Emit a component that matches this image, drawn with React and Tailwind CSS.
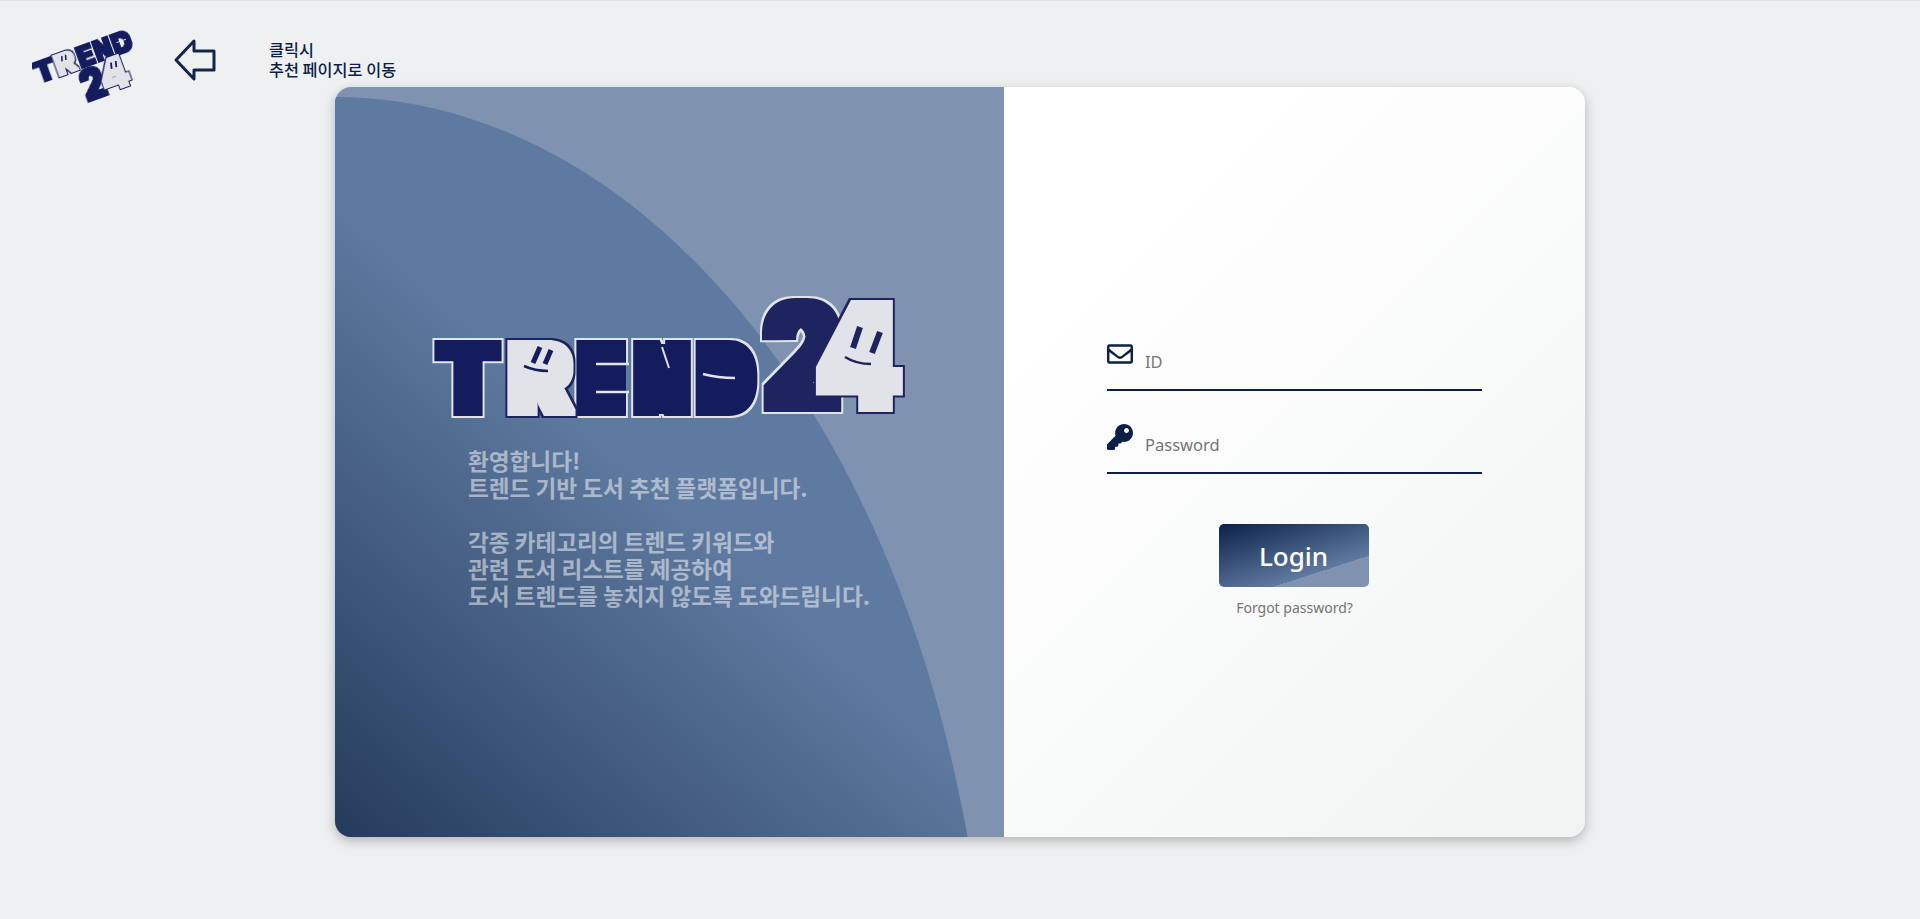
import React from 'react';
import { FaRegEnvelope, FaKey } from 'react-icons/fa';

const DARK = '#141c5e';
const NAVY = '#1e2460';
const LIGHT = '#e1e3e8';

// fattens a letter and puts an outline round it (the logo face is much heavier than Inter)
const Outline = ({ id, fat, edge, fill, line }) => (
    <filter id={id} x="-60" y="-60" width="700" height="300" filterUnits="userSpaceOnUse" colorInterpolationFilters="sRGB">
        <feMorphology in="SourceAlpha" operator="dilate" radius={fat} result="fatA" />
        <feMorphology in="SourceAlpha" operator="dilate" radius={edge} result="edgeA" />
        <feFlood floodColor={line} result="lineC" />
        <feComposite in="lineC" in2="edgeA" operator="in" result="outer" />
        <feFlood floodColor={fill} result="fillC" />
        <feComposite in="fillC" in2="fatA" operator="in" result="inner" />
        <feMerge>
            <feMergeNode in="outer" />
            <feMergeNode in="inner" />
        </feMerge>
    </filter>
);

const Letter = ({ ch, x, y, w, size, filter }) => (
    <text
        x={x}
        y={y}
        fontSize={size}
        fontFamily="Inter, 'Liberation Sans', sans-serif"
        fontWeight="900"
        textLength={w}
        lengthAdjust="spacingAndGlyphs"
        filter={`url(#${filter})`}
    >
        {ch}
    </text>
);

const BigLogo = () => (
    <svg width="500" height="150" viewBox="0 0 500 150" className="block">
        <defs>
            <Outline id="bigDark" fat="6 3" edge="8 5" fill={DARK} line={LIGHT} />
            <Outline id="bigNavy" fat="6 3" edge="8 5" fill={NAVY} line={LIGHT} />
            <Outline id="bigLight" fat="6 3" edge="8 5" fill={LIGHT} line={NAVY} />
        </defs>
        <Letter ch="T" x={18} y={133} w={60} size={96} filter="bigDark" />
        <Letter ch="D" x={278} y={133} w={56} size={96} filter="bigDark" />
        <Letter ch="N" x={216} y={133} w={52} size={96} filter="bigDark" />
        <Letter ch="E" x={159} y={133} w={44} size={96} filter="bigDark" />
        <Letter ch="R" x={89} y={133} w={62} size={96} filter="bigLight" />
        <Letter ch="2" x={344} y={129} w={76} size={146} filter="bigNavy" />
        <Letter ch="4" x={397} y={129} w={84} size={146} filter="bigLight" />
        {/* counters are filled in the logo */}
        <rect x="100" y="66" width="36" height="28" fill={LIGHT} />
        <rect x="164" y="64" width="42" height="70" fill={DARK} />
        <rect x="224" y="64" width="44" height="70" fill={DARK} />
        <rect x="290" y="68" width="30" height="60" fill={DARK} />
        <rect x="430" y="40" width="32" height="55" fill={LIGHT} />
        <path d="M176 84 H209 M176 112 H209" stroke={LIGHT} strokeWidth="2.5" />
        <line x1="120" y1="67" x2="113" y2="83" stroke={DARK} strokeWidth="5" />
        <line x1="131" y1="70" x2="125" y2="84" stroke={DARK} strokeWidth="5" />
        <path d="M104 86 Q115 91 128 91" fill="none" stroke={DARK} strokeWidth="2.5" />
        <path d="M283 94 Q298 98 315 98" fill="none" stroke={LIGHT} strokeWidth="2.5" />
        <line x1="242" y1="67" x2="249" y2="88" stroke={LIGHT} strokeWidth="2" />
        <line x1="440" y1="47" x2="433" y2="68" stroke={NAVY} strokeWidth="6" />
        <line x1="460" y1="52" x2="452" y2="73" stroke={NAVY} strokeWidth="6" />
        <path d="M425 77 Q436 84 451 84" fill="none" stroke={NAVY} strokeWidth="2.5" />
    </svg>
);

const SmallLogo = () => (
    <svg width="115" height="85" viewBox="0 0 115 85" className="block">
        <defs>
            <Outline id="smDark" fat="1 0.8" edge="1 0.8" fill={DARK} line={DARK} />
            <Outline id="smLight" fat="1" edge="1.8" fill={LIGHT} line={DARK} />
        </defs>
        <g transform="rotate(-20 55 42)">
            <Letter ch="T" x={2} y={44} w={22} size={28} filter="smDark" />
            <Letter ch="R" x={24} y={44} w={22} size={28} filter="smLight" />
            <Letter ch="E" x={48} y={44} w={17} size={28} filter="smDark" />
            <Letter ch="N" x={66} y={44} w={18} size={28} filter="smDark" />
            <Letter ch="D" x={85} y={44} w={20} size={28} filter="smDark" />
            <Letter ch="2" x={42} y={78} w={24} size={44} filter="smDark" />
            <Letter ch="4" x={62} y={76} w={30} size={44} filter="smLight" />
            <rect x="29" y="26" width="11" height="8" fill={LIGHT} />
            <rect x="72" y="49" width="13" height="14" fill={LIGHT} />
            <line x1="34" y1="26" x2="32.5" y2="31" stroke={DARK} strokeWidth="1.5" />
            <line x1="38" y1="26" x2="36.5" y2="31" stroke={DARK} strokeWidth="1.5" />
            <line x1="78" y1="49" x2="76.5" y2="55" stroke={DARK} strokeWidth="1.8" />
            <line x1="83" y1="49" x2="81.5" y2="55" stroke={DARK} strokeWidth="1.8" />
            <line x1="90" y1="32" x2="100" y2="32" stroke={LIGHT} strokeWidth="1" />
        </g>
    </svg>
);

const Field = ({ icon, placeholder, type }) => (
    <div className="relative h-[52px] w-[375px] border-b-2 border-[#0b1f47]">
        <div className="absolute left-0 top-[2px] text-[#0b1f47]">{icon}</div>
        <input
            type={type}
            placeholder={placeholder}
            className="h-full w-full bg-transparent pb-[5px] pl-[38px] font-['Noto_Sans','Noto_Sans_CJK_KR',sans-serif] text-[16.5px] outline-none placeholder:text-[#757575]"
        />
    </div>
);

export default function App() {
    return (
        <div className="min-h-[919px] border-t border-[#e3e4e0] bg-[#eff0f2] font-['Noto_Sans_CJK_KR','Noto_Sans',sans-serif]">
            {/* 상단 */}
            <div className="flex h-[86px] items-start pl-[32px] pt-[21px]">
                <SmallLogo />
                <svg width="44" height="44" viewBox="0 0 44 44" className="ml-[26px] mt-[16px]" fill="none" stroke="#12264b" strokeWidth="3" strokeLinejoin="round">
                    <path d="M21 3 L3 22 L21 41 V32 H41 V13 H21 Z" />
                </svg>
                <div className="ml-[52px] mt-[17px] text-[16.3px] font-medium leading-[20px] text-[#0b1f47]">
                    <div>클릭시</div>
                    <div>추천 페이지로 이동</div>
                </div>
            </div>

            {/* 카드 */}
            <div className="mx-auto flex h-[750px] w-[1250px] overflow-hidden rounded-[16px] shadow-[0_4px_12px_rgba(0,0,0,0.25)]">
                <div className="relative w-[669px] overflow-hidden bg-[#7f92b0]">
                    <div className="absolute left-0 top-[10px] h-[1000px] w-[655px] rounded-tr-[100%] bg-[linear-gradient(42deg,#1b3152_10%,#5f7aa0_57%)]"></div>
                    <div className="relative pl-[85px] pt-[193px]">
                        <BigLogo />
                        <div className="ml-[48px] mt-[17px] text-[22.6px] font-bold leading-[27px] text-white/50">
                            <div>환영합니다!</div>
                            <div>트렌드 기반 도서 추천 플랫폼입니다.</div>
                            <div className="h-[27px]"></div>
                            <div>각종 카테고리의 트렌드 키워드와</div>
                            <div>관련 도서 리스트를 제공하여</div>
                            <div>도서 트렌드를 놓치지 않도록 도와드립니다.</div>
                        </div>
                    </div>
                </div>
                <div className="flex flex-1 flex-col items-center bg-[linear-gradient(135deg,#ffffff_20%,#f1f3f3_100%)] pt-[252px]">
                    <div className="flex flex-col gap-[31px]">
                        <Field type="text" placeholder="ID" icon={<FaRegEnvelope size={26} />} />
                        <Field type="password" placeholder="Password" icon={<FaKey size={26} />} />
                    </div>
                    <button className="mr-[2px] mt-[50px] h-[63px] w-[150px] rounded-[5px] bg-[linear-gradient(162deg,#0b2148_0%,#5f7aa0_72%,#7f92b0_72%)] text-[26px] font-medium text-white">
                        <span className="font-['Noto_Sans',sans-serif]">Login</span>
                    </button>
                    <a className="mt-[10px] font-['Noto_Sans',sans-serif] text-[14px] text-[#757575]">Forgot password?</a>
                </div>
            </div>
        </div>
    );
}
